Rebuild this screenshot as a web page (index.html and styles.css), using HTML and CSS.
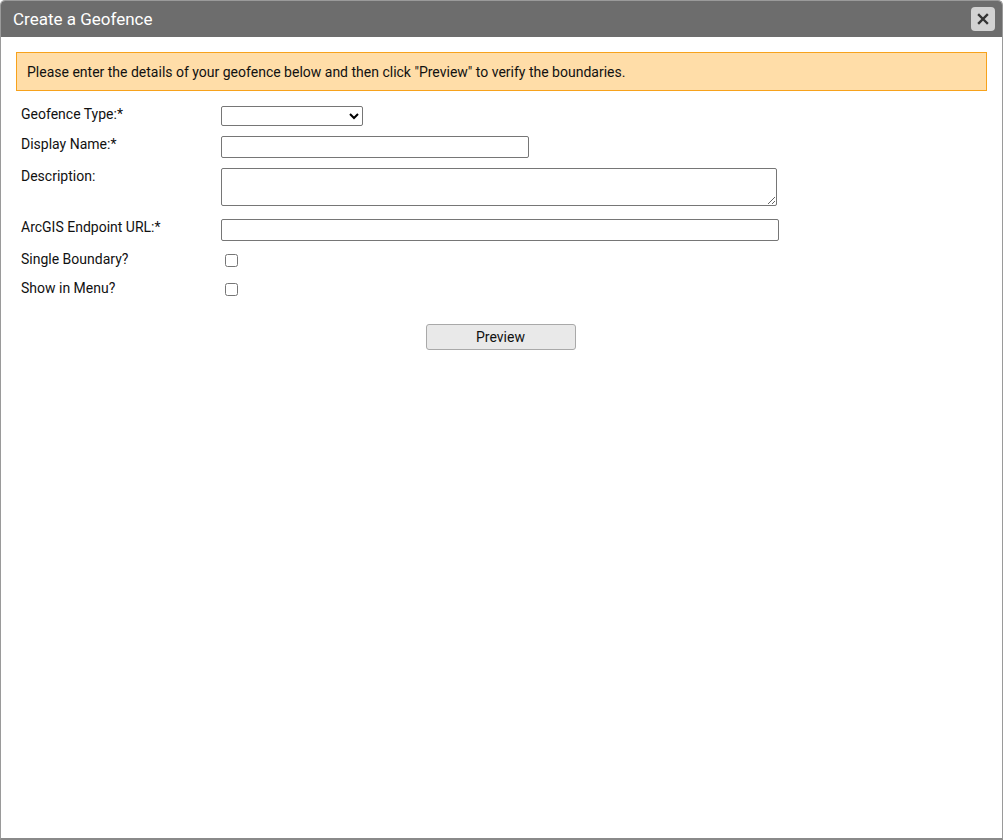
FILE: index.html
```html
<!DOCTYPE html>
<html lang="en">
<head>
    <meta charset="UTF-8">
    <title>Create a Geofence</title>
    <link rel="stylesheet" href="styles.css">
</head>
<body>
    <div class="dialog">
        <div class="titlebar">
            <span class="title">Create a Geofence</span>
            <button class="close" type="button" title="Close">
                <svg width="12" height="12" viewBox="0 0 12 12"><path d="M2 2 L10 10 M10 2 L2 10" stroke="#333" stroke-width="2.4" stroke-linecap="square"/></svg>
            </button>
        </div>
        <div class="content">
            <div class="notice">Please enter the details of your geofence below and then click "Preview" to verify the boundaries.</div>
            <form class="form">
                <div class="row">
                    <label for="type">Geofence Type:*</label>
                    <select id="type" class="select"></select>
                </div>
                <div class="row">
                    <label for="name">Display Name:*</label>
                    <input type="text" id="name" class="input name">
                </div>
                <div class="row">
                    <label for="desc">Description:</label>
                    <textarea id="desc" class="textarea"></textarea>
                </div>
                <div class="row">
                    <label for="url">ArcGIS Endpoint URL:*</label>
                    <input type="text" id="url" class="input url">
                </div>
                <div class="row">
                    <label for="single">Single Boundary?</label>
                    <input type="checkbox" id="single" class="check">
                </div>
                <div class="row">
                    <label for="menu">Show in Menu?</label>
                    <input type="checkbox" id="menu" class="check">
                </div>
                <div class="actions">
                    <button type="button" class="btn">Preview</button>
                </div>
            </form>
        </div>
    </div>
</body>
</html>
```

FILE: styles.css
```css
body {
    margin: 0;
    font-family: Roboto, "Liberation Sans", Arial, sans-serif;
    font-size: 14px;
    color: #111;
    background-color: #fff;
}
.dialog {
    width: 1003px;
    height: 840px;
    box-sizing: border-box;
    border: 1px solid #9a9a9a;
    border-bottom: 2px solid #8a8a8a;
    border-radius: 5px 5px 0 0;
    overflow: hidden;
    background-color: #fff;
}
.titlebar {
    height: 36px;
    background-color: #6d6d6d;
    display: flex;
    align-items: center;
    justify-content: space-between;
    padding: 0 7px 0 12px;
}
.title {
    color: #fff;
    font-size: 17px;
    font-weight: 400;
}
.close {
    width: 24px;
    height: 24px;
    border: none;
    border-radius: 4px;
    background-color: #d2d2d2;
    padding: 0;
    display: flex;
    align-items: center;
    justify-content: center;
    cursor: pointer;
}
.content {
    padding: 15px 15px 0 15px;
}
.notice {
    background-color: #ffdda8;
    border: 1px solid #f7a21c;
    padding: 11px 10px 10px 10px;
    line-height: 16px;
}
.form {
    display: flex;
    flex-direction: column;
    gap: 10px;
    padding: 15px 0 0 5px;
}
.row {
    display: flex;
    align-items: flex-start;
    line-height: 16px;
}
.row label {
    width: 200px;
    flex-shrink: 0;
}
.select {
    width: 142px;
    height: 20px;
    margin: 0;
    border: 1px solid #767676;
    border-radius: 2px;
    background-color: #fff;
    font-family: inherit;
    font-size: 13px;
}
.input {
    height: 22px;
    box-sizing: border-box;
    margin: 0;
    border: 1px solid #767676;
    border-radius: 2px;
    padding: 1px 2px;
    font-family: inherit;
}
.name {
    width: 308px;
}
.url {
    width: 558px;
}
.textarea {
    display: block;
    width: 556px;
    height: 38px;
    box-sizing: border-box;
    margin: 0 0 3px 0;
    border: 1px solid #767676;
    border-radius: 2px;
    font-family: inherit;
}
.check {
    width: 13px;
    height: 13px;
    margin: 3px 0 3px 4px;
}
.actions {
    text-align: center;
    margin-top: 15px;
    margin-left: -7px;
}
.btn {
    width: 150px;
    height: 26px;
    background-color: #e9e9e9;
    border: 1px solid #a9a9a9;
    border-radius: 3px;
    font-family: inherit;
    font-size: 14px;
    color: #111;
    cursor: pointer;
}
```
